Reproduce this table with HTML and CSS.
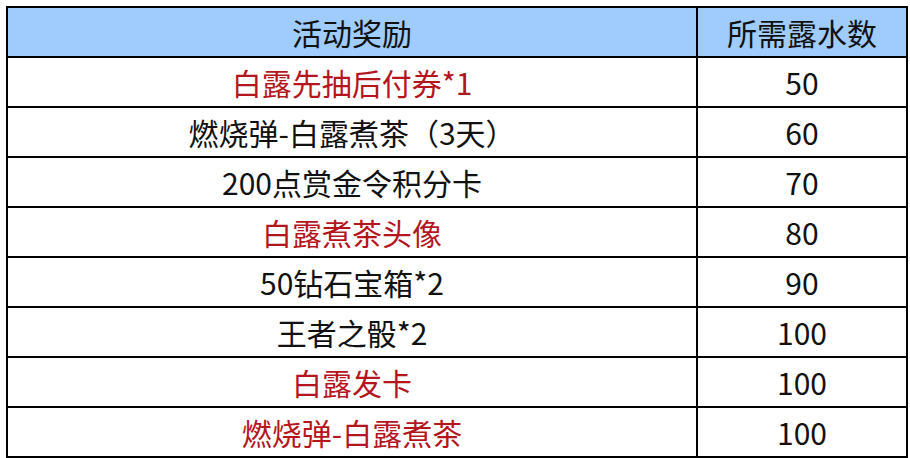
FILE: index.html
```html
<!DOCTYPE html>
<html lang="zh">
<head>
<meta charset="utf-8">
<link rel="stylesheet" href="styles.css">
</head>
<body>
<table class="rewards">
  <thead>
    <tr><th class="c-name">活动奖励</th><th class="c-num">所需露水数</th></tr>
  </thead>
  <tbody>
    <tr><td class="red">白露先抽后付券*1</td><td>50</td></tr>
    <tr><td>燃烧弹-白露煮茶（3天）</td><td>60</td></tr>
    <tr><td>200点赏金令积分卡</td><td>70</td></tr>
    <tr><td class="red">白露煮茶头像</td><td>80</td></tr>
    <tr><td>50钻石宝箱*2</td><td>90</td></tr>
    <tr><td>王者之骰*2</td><td>100</td></tr>
    <tr><td class="red">白露发卡</td><td>100</td></tr>
    <tr><td class="red">燃烧弹-白露煮茶</td><td>100</td></tr>
  </tbody>
</table>
</body>
</html>
```
FILE: styles.css
```css
html, body {
  margin: 0;
  padding: 0;
  background: #ffffff;
}
body {
  padding: 6px 0 0 6px;
  font-family: "Noto Sans CJK SC", "Noto Sans", sans-serif;
}
.rewards {
  border-collapse: collapse;
  width: 900px;
  table-layout: fixed;
}
.rewards th, .rewards td {
  border: 2px solid #000;
  height: 48px;
  padding: 0;
  text-align: center;
  vertical-align: middle;
  font-size: 30px;
  font-weight: normal;
  color: #111;
  line-height: 1;
}
.rewards thead th {
  background: #9fcbfd;
}
.c-name { width: 688px; }
.c-num { width: 208px; }
.rewards td.red {
  color: #b5151d;
}
```
